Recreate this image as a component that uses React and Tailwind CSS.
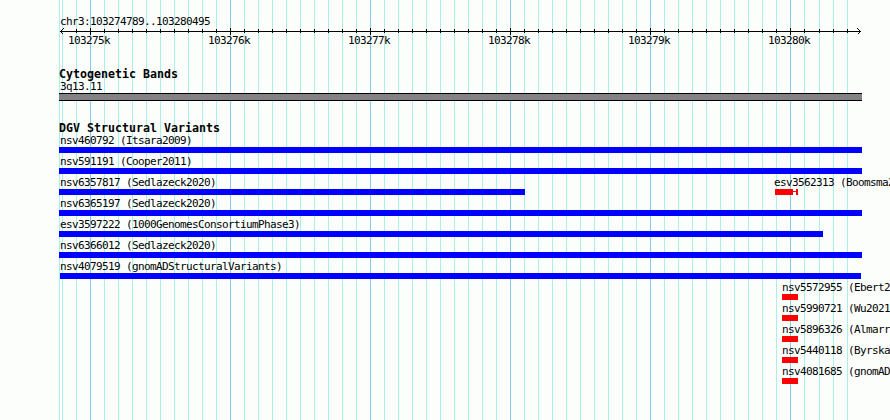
const majorTicks = [
  { x: 90, label: '103275k' },
  { x: 230, label: '103276k' },
  { x: 370, label: '103277k' },
  { x: 510, label: '103278k' },
  { x: 650, label: '103279k' },
  { x: 790, label: '103280k' },
]

// 14px steps across the region, with one rounding step near the end
const ticks = [...Array.from({ length: 54 }, (_, i) => 62 + i * 14), 819, 833, 847]
const gridLines = [59, ...ticks]

function isMajor(x) {
  return majorTicks.some((t) => t.x === x)
}

const variants = [
  [{ name: 'nsv460792 (Itsara2009)', start: 59, end: 862 }],
  [{ name: 'nsv591191 (Cooper2011)', start: 59, end: 862 }],
  [
    { name: 'nsv6357817 (Sedlazeck2020)', start: 59, end: 525 },
    { name: 'esv3562313 (Boomsma2014)', start: 775, end: 793, loss: true, tail: true },
  ],
  [{ name: 'nsv6365197 (Sedlazeck2020)', start: 59, end: 862 }],
  [{ name: 'esv3597222 (1000GenomesConsortiumPhase3)', start: 59, end: 823 }],
  [{ name: 'nsv6366012 (Sedlazeck2020)', start: 59, end: 862 }],
  [{ name: 'nsv4079519 (gnomADStructuralVariants)', start: 60, end: 861 }],
  [{ name: 'nsv5572955 (Ebert2021)', start: 782, end: 798, loss: true }],
  [{ name: 'nsv5990721 (Wu2021)', start: 782, end: 798, loss: true }],
  [{ name: 'nsv5896326 (Almarri2020)', start: 782, end: 798, loss: true }],
  [{ name: 'nsv5440118 (Byrska-Bishop2022)', start: 782, end: 798, loss: true }],
  [{ name: 'nsv4081685 (gnomADStructuralVariants)', start: 782, end: 798, loss: true }],
]

function Grid() {
  return (
    <svg className="absolute inset-0" width="890" height="420" shapeRendering="crispEdges">
      {gridLines.map((x) => (
        <rect key={x} x={x} y="0" width="1" height="420" fill={isMajor(x) ? '#84cbea' : '#aceeea'} />
      ))}
    </svg>
  )
}

function Axis() {
  return (
    <svg className="block" width="890" height="9" shapeRendering="crispEdges">
      <rect x="60" y="4" width="801" height="1" />
      {ticks.slice(1).map((x) => (
        <rect key={x} x={x} y={isMajor(x) ? 1 : 2} width="1" height={isMajor(x) ? 7 : 4} />
      ))}
      <path d="M63.5 1.5L60.5 4.5L63.5 7.5M857.5 1.5L860.5 4.5L857.5 7.5" fill="none" stroke="#000" />
    </svg>
  )
}

function Feature({ feature, offset }) {
  const { name, start, end, loss, tail } = feature
  return (
    <div className="shrink-0" style={{ marginLeft: start - offset, width: end - start }}>
      <div className={`h-[15px] leading-[18px] whitespace-nowrap ${start === 59 ? 'pl-[1px]' : ''} ${tail ? '-ml-px' : ''}`}>
        {name}
      </div>
      <div className="flex h-[6px]">
        <div className={`w-full h-full shrink-0 ${loss ? 'bg-[#ff0000]' : 'bg-[#0000ff]'}`} />
        {tail && (
          <div className="flex items-center shrink-0">
            <div className="w-[3px] h-px mb-px bg-[#ff0000]" />
            <div className="w-[2px] h-[6px] bg-[#ff0000]" />
          </div>
        )}
      </div>
    </div>
  )
}

export default function App() {
  return (
    <div className="relative w-[890px] h-[420px] overflow-hidden bg-[#fcfefc] text-black font-['DejaVu_Sans_Mono',monospace] text-[11px] tracking-[-0.622px]">
      <Grid />
      <div className="relative pt-[13px]">
        {/* Ruler */}
        <div className="h-[14px] pl-[60px] leading-[18px]">chr3:103274789..103280495</div>
        <Axis />
        <div className="flex h-[32px] pl-[68px] leading-[10px]">
          {majorTicks.map((t) => (
            <div key={t.x} className="w-[140px] shrink-0">{t.label}</div>
          ))}
        </div>

        {/* Cytogenetic band */}
        <h2 className="h-[12px] pl-[59px] font-bold text-[11.6px] leading-[12px] tracking-[0.015px]">Cytogenetic Bands</h2>
        <div className="h-[13px] pl-[60px] leading-[14px]">3q13.11</div>
        <div className="ml-[59px] w-[803px] h-[8px] bg-[#848284] border-y border-black" />

        {/* Variants */}
        <h2 className="mt-[21px] h-[10px] pl-[59px] font-bold text-[11.6px] leading-[12px] tracking-[0.015px]">DGV Structural Variants</h2>
        {variants.map((row, i) => (
          <div key={i} className="flex h-[21px]">
            {row.map((f, j) => (
              <Feature key={f.name} feature={f} offset={j > 0 ? row[j - 1].end : 0} />
            ))}
          </div>
        ))}
      </div>
    </div>
  )
}
